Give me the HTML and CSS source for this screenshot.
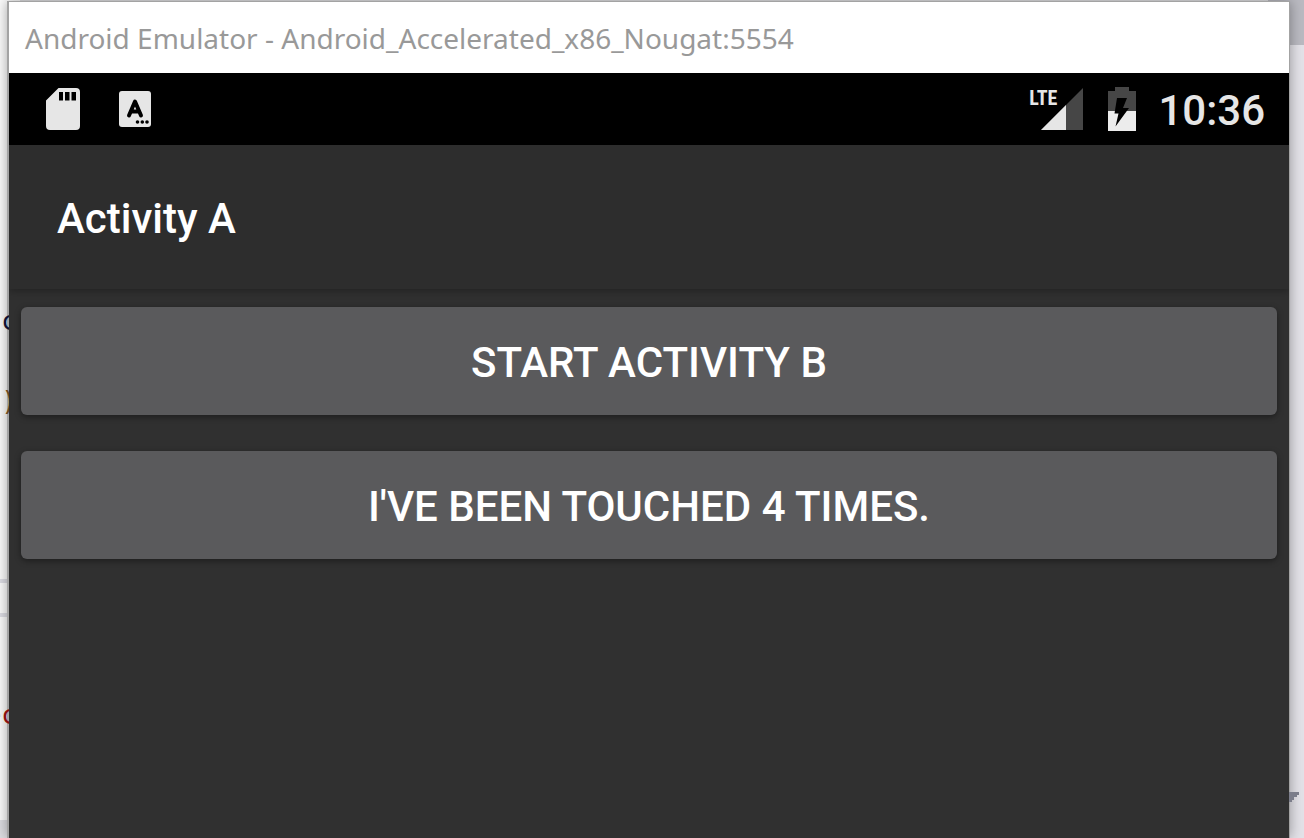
FILE: index.html
```html
<!DOCTYPE html>
<html lang="en">
<head>
<meta charset="utf-8">
<title>Android Emulator</title>
<link rel="stylesheet" href="styles.css">
</head>
<body>
<div class="desktop" aria-hidden="true">
  <div class="editor">
    <div class="rule rule-top"></div>
    <div class="rule rule-bottom"></div>
    <div class="editor-foot"></div>
  </div>
  <div class="panel">
    <div class="panel-head"></div>
  </div>
</div>
<main class="window">
  <header class="titlebar">Android Emulator - Android_Accelerated_x86_Nougat:5554</header>
  <div class="statusbar">
    <div class="status-group notices">
      <svg width="34" height="42" viewBox="0 0 34 42" role="img" aria-label="SD card"><path fill="#e6e6e6" fill-rule="evenodd" d="M12.500 0H30a4 4 0 0 1 4 4V38a4 4 0 0 1-4 4H4a4 4 0 0 1-4-4V12.500ZM13 4V12.500h4V4ZM19 4V12.500h4.500V4ZM25.500 4V12.500h4.500V4Z"/></svg>
      <svg width="32" height="36" viewBox="0 0 32 36" role="img" aria-label="Keyboard"><rect width="32" height="36" rx="3" fill="#e6e6e6"/><path d="M10 24.500 16 10.500 22 24.500M12 20.500H20" fill="none" stroke="#000" stroke-width="4" stroke-linecap="round" stroke-linejoin="round"/><circle cx="18.500" cy="31" r="1.800"/><circle cx="23.300" cy="31" r="1.800"/><circle cx="28" cy="31" r="1.800"/></svg>
    </div>
    <div class="status-group system">
      <div class="signal">
        <svg width="42" height="42" viewBox="0 0 42 42" role="img" aria-label="Signal"><path fill="#464646" d="M42 0V42H0Z"/><path fill="#e6e6e6" d="M25 17V42H0Z"/></svg>
        <span class="lte">LTE</span>
      </div>
      <svg width="28" height="44" viewBox="0 0 28 44" role="img" aria-label="Battery charging"><path fill="#464646" d="M7 0H21V4H28V24H0V4H7Z"/><path fill="#ececec" d="M0 24H28V44H0Z"/><path d="M9 11H19L15 21H21L7.500 39.500 10.500 26.500H6.500Z"/></svg>
      <time class="clock">10:36</time>
    </div>
  </div>
  <h1 class="appbar">Activity A</h1>
  <div class="content">
    <button class="action" type="button">START ACTIVITY B</button>
    <button class="action" type="button">I'VE BEEN TOUCHED 4 TIMES.</button>
  </div>
</main>
<div class="gutter" aria-hidden="true">
  <span class="code code-navy">nc</span>
  <span class="code code-paren">)</span>
  <span class="code code-red">ec</span>
</div>
<svg class="pointer" width="10" height="11" viewBox="0 0 10 11" aria-hidden="true"><path fill="#7b7d8a" d="M0 0H10V3H8V5H5V8H3V10H0Z"/></svg>
</body>
</html>
```
FILE: styles.css
```css
* { box-sizing: border-box; }

body {
  margin: 0;
  min-height: 100vh;
  display: flex;
  position: relative;
  padding: 1px 14px 0 7px;
  overflow: hidden;
  font-family: Roboto, "Liberation Sans", sans-serif;
}

/* What shows around the edges of the emulator window */
.desktop {
  position: absolute;
  inset: 0;
  display: flex;
  justify-content: space-between;
  background: #e0e0e3;
}
.editor {
  position: relative;
  width: 20px;
  background: #fbfbfb;
}
.panel { width: 36px; background: #e3e2e8; }
.panel-head { height: 45px; background: #babac1; }
.gutter {
  position: absolute;
  top: 0;
  bottom: 0;
  left: 0;
  width: 9px;
  overflow: hidden;
}
.code {
  position: absolute;
  right: -8px;
  font: 26px/32px "DejaVu Sans Mono", monospace;
}
.code-navy { top: 305px; color: #111133; }
.code-paren { top: 385px; color: #6b4a20; }
.code-red { top: 699px; color: #8b1010; }
.rule { position: absolute; left: 0; width: 100%; height: 4px; background: #dddde4; }
.rule-top { top: 579px; }
.rule-bottom { top: 613px; }
.editor-foot { position: absolute; bottom: 0; width: 100%; height: 18px; background: #dddde1; }

.window {
  position: relative;
  flex: 1;
  display: flex;
  flex-direction: column;
  background: #303030;
  border: 1px solid #a3a3a3;
  border-left-width: 2px;
  border-bottom: 0;
  box-shadow: 0 0 12px rgba(0, 0, 0, 0.35);
}
.titlebar {
  height: 71px;
  padding: 0 16px;
  background: #fff;
  color: #999;
  font: 28px/73px "Noto Sans", "Open Sans", sans-serif;
  white-space: nowrap;
}
.statusbar {
  height: 72px;
  padding: 0 24px 0 37px;
  display: flex;
  align-items: center;
  justify-content: space-between;
  background: #000;
  color: #e6e6e6;
}
.status-group { display: flex; align-items: center; }
.notices { gap: 39px; }
.system { gap: 22px; }
.signal { position: relative; height: 42px; margin-right: 3px; }
.lte {
  position: absolute;
  right: 26px;
  top: 0;
  font: bold 20px/20px "Roboto Condensed", "Open Sans Condensed", "Liberation Sans Narrow", "Open Sans", sans-serif;
}
.clock { padding-top: 4px; font-size: 42px; line-height: 68px; font-weight: 500; }
.appbar {
  position: relative;
  height: 144px;
  margin: 0;
  padding: 0 48px;
  background: #2d2d2d;
  box-shadow: 0 2px 8px rgba(0, 0, 0, 0.3);
  clip-path: inset(0 0 -12px 0);
  color: #fff;
  font-size: 42px;
  line-height: 148px;
  font-weight: 500;
}
.content {
  display: grid;
  gap: 36px;
  padding: 18px 12px;
}
.action {
  height: 108px;
  padding: 4px 0 0;
  border: 0;
  border-radius: 6px;
  background: #5a5a5c;
  box-shadow: 0 2px 6px rgba(0, 0, 0, 0.4);
  color: #fff;
  font: 500 42px/48px Roboto, sans-serif;
}
.pointer { position: absolute; right: 5px; top: 792px; }
```
